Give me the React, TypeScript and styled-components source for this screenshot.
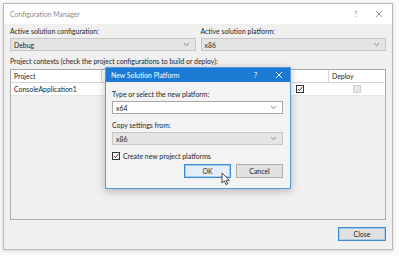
import React from 'react';
import styled, { createGlobalStyle } from 'styled-components';

const Global = createGlobalStyle`
  html, body {
    margin: 0;
    padding: 0;
    background: #ffffff;
  }
  body {
    font-family: Lato, "Noto Sans", sans-serif;
    font-size: 6.9px;
    color: #1e1e1e;
  }
`;

function Chevron({ color = '#777' }: { color?: string }) {
  return (
    <svg width="7" height="5" viewBox="0 0 7 5">
      <path d="M1 1.2 L3.5 3.6 L6 1.2" fill="none" stroke={color} strokeWidth="0.9" />
    </svg>
  );
}

function CloseGlyph({ color }: { color: string }) {
  return (
    <svg width="8" height="8" viewBox="0 0 8 8">
      <path d="M1 1 L7 7 M7 1 L1 7" stroke={color} strokeWidth="0.9" />
    </svg>
  );
}

function Check({ disabled }: { disabled?: boolean }) {
  return (
    <CheckBox disabled={disabled}>
      {!disabled && (
        <svg width="6" height="6" viewBox="0 0 6 6">
          <path d="M0.8 3 L2.4 4.6 L5.3 1.1" fill="none" stroke="#222" strokeWidth="1" />
        </svg>
      )}
    </CheckBox>
  );
}

function Cursor() {
  return (
    <CursorWrap>
      <svg width="10" height="14" viewBox="0 0 10 14">
        <path d="M1 1 L1 11 L3.4 8.8 L5 12.6 L6.6 11.9 L5 8.3 L8.4 8.3 Z" fill="#fff" stroke="#222" strokeWidth="0.8" strokeLinejoin="round" />
      </svg>
    </CursorWrap>
  );
}

export default function App() {
  return (
    <>
      <Global />
      <Desktop>
        <Window>
          <TitleBar>
            <TitleText>Configuration Manager</TitleText>
            <TitleButtons>
              <HelpMark color="#8a8a8a">?</HelpMark>
              <CloseGlyph color="#8a8a8a" />
            </TitleButtons>
          </TitleBar>
          <Body>
            <FieldRow>
              <Field>
                <Label>Active solution configuration:</Label>
                <Combo>
                  <span>Debug</span>
                  <Chevron />
                </Combo>
              </Field>
              <Field>
                <Label>Active solution platform:</Label>
                <Combo>
                  <span>x86</span>
                  <Chevron />
                </Combo>
              </Field>
            </FieldRow>
            <Label>Project contexts (check the project configurations to build or deploy):</Label>
            <Grid>
              <GridRow header>
                <Cell>Project</Cell>
                <Cell />
                <Cell />
                <Cell />
                <Cell>Deploy</Cell>
              </GridRow>
              <GridRow>
                <Cell>ConsoleApplication1</Cell>
                <Cell />
                <Cell />
                <Cell center>
                  <Check />
                </Cell>
                <Cell center>
                  <Check disabled />
                </Cell>
              </GridRow>
            </Grid>
            <Footer>
              <Button primary wide>Close</Button>
            </Footer>
          </Body>
        </Window>

        <Dialog>
          <DialogTitle>
            <span>New Solution Platform</span>
            <TitleButtons>
              <HelpMark color="#ffffff">?</HelpMark>
              <CloseGlyph color="#ffffff" />
            </TitleButtons>
          </DialogTitle>
          <DialogBody>
            <Label>Type or select the new platform:</Label>
            <Combo white>
              <span>x64</span>
              <Chevron />
            </Combo>
            <Label spaced>Copy settings from:</Label>
            <Combo>
              <span>x86</span>
              <Chevron />
            </Combo>
            <CheckLine>
              <Check />
              <span>Create new project platforms</span>
            </CheckLine>
            <ButtonRow>
              <Button primary>OK</Button>
              <Button>Cancel</Button>
            </ButtonRow>
          </DialogBody>
          <Cursor />
        </Dialog>
      </Desktop>
    </>
  );
}

const Desktop = styled.div`
  position: relative;
  width: 399px;
  height: 256px;
  padding: 3px 0 0 3px;
  box-sizing: border-box;
  background: #fbfbfb;
`;

const Window = styled.div`
  width: 390px;
  height: 247px;
  box-sizing: border-box;
  border: 1px solid #b9b9b9;
  background: #f0f0f0;
  box-shadow: 0 1px 4px rgba(0, 0, 0, 0.18);
  display: flex;
  flex-direction: column;
`;

const TitleBar = styled.div`
  height: 20px;
  background: #ffffff;
  display: flex;
  align-items: center;
  justify-content: space-between;
  padding: 0 9px 0 6px;
`;

const TitleText = styled.span`
  color: #8c8c8c;
`;

const TitleButtons = styled.div`
  display: flex;
  align-items: center;
  gap: 18px;
`;

const HelpMark = styled.span<{ color: string }>`
  color: ${(p) => p.color};
`;

const Body = styled.div`
  flex: 1;
  display: flex;
  flex-direction: column;
  padding: 2px 6px 8px 6px;
`;

const FieldRow = styled.div`
  display: grid;
  grid-template-columns: 1fr 1fr;
  gap: 5px;
  margin-bottom: 5px;
`;

const Field = styled.div`
  display: flex;
  flex-direction: column;
`;

const Label = styled.div<{ spaced?: boolean }>`
  line-height: 10px;
  height: 10px;
  margin: ${(p) => (p.spaced ? '6px 0 2px' : '0 0 2px')};
  white-space: nowrap;
`;

const Combo = styled.div<{ white?: boolean }>`
  height: 13px;
  box-sizing: border-box;
  border: 1px solid ${(p) => (p.white ? '#a8a8a8' : '#c6c6c6')};
  background: ${(p) => (p.white ? '#ffffff' : '#e4e4e4')};
  display: flex;
  align-items: center;
  justify-content: space-between;
  padding: 0 5px 0 3px;
`;

const Grid = styled.div`
  flex: 1;
  margin-top: 1px;
  border: 1px solid #a9a9a9;
  background: #f0f0f0;
  display: flex;
  flex-direction: column;
`;

const GridRow = styled.div<{ header?: boolean }>`
  display: grid;
  grid-template-columns: 90px 90px 80px 57px 1fr;
  height: 12px;
  background: #ffffff;
  border-bottom: 1px solid ${(p) => (p.header ? '#d6d6d6' : '#e6e6e6')};
  & > div + div {
    border-left: 1px solid ${(p) => (p.header ? '#d6d6d6' : 'transparent')};
  }
`;

const Cell = styled.div<{ center?: boolean }>`
  display: flex;
  align-items: center;
  justify-content: ${(p) => (p.center ? 'center' : 'flex-start')};
  padding-left: ${(p) => (p.center ? '0' : '3px')};
  overflow: hidden;
  white-space: nowrap;
`;

const CheckBox = styled.div<{ disabled?: boolean }>`
  width: 6px;
  height: 6px;
  border: 1px solid ${(p) => (p.disabled ? '#cfcfcf' : '#333')};
  background: ${(p) => (p.disabled ? '#e6e6e6' : '#ffffff')};
  display: flex;
  align-items: center;
  justify-content: center;
  flex-shrink: 0;
`;

const Footer = styled.div`
  display: flex;
  justify-content: flex-end;
  margin-top: 7px;
`;

const Button = styled.div<{ primary?: boolean; wide?: boolean }>`
  width: ${(p) => (p.wide ? '48px' : '47px')};
  height: 14px;
  box-sizing: border-box;
  border: 1px solid ${(p) => (p.primary ? '#3c8ad6' : '#adadad')};
  box-shadow: ${(p) => (p.primary ? 'inset 0 0 0 1px #a5cbef' : 'none')};
  background: ${(p) => (p.primary && !p.wide ? '#e3eef9' : '#e1e1e1')};
  display: flex;
  align-items: center;
  justify-content: center;
`;

const Dialog = styled.div`
  position: absolute;
  left: 105px;
  top: 67px;
  width: 186px;
  height: 122px;
  box-sizing: border-box;
  border: 1px solid #5a9ad8;
  background: #f3f3f3;
  box-shadow: 0 2px 8px rgba(0, 0, 0, 0.25);
  display: flex;
  flex-direction: column;
`;

const DialogTitle = styled.div`
  height: 14px;
  background: #1b7bd4;
  color: #ffffff;
  display: flex;
  align-items: center;
  justify-content: space-between;
  padding: 0 7px 0 5px;
`;

const DialogBody = styled.div`
  display: flex;
  flex-direction: column;
  padding: 7px 7px 0 6px;
`;

const CheckLine = styled.div`
  display: flex;
  align-items: center;
  gap: 3px;
  margin-top: 6px;
  height: 10px;
`;

const ButtonRow = styled.div`
  display: flex;
  justify-content: flex-end;
  gap: 5px;
  margin-top: 3px;
`;

const CursorWrap = styled.div`
  position: absolute;
  left: 115px;
  top: 104px;
`;
